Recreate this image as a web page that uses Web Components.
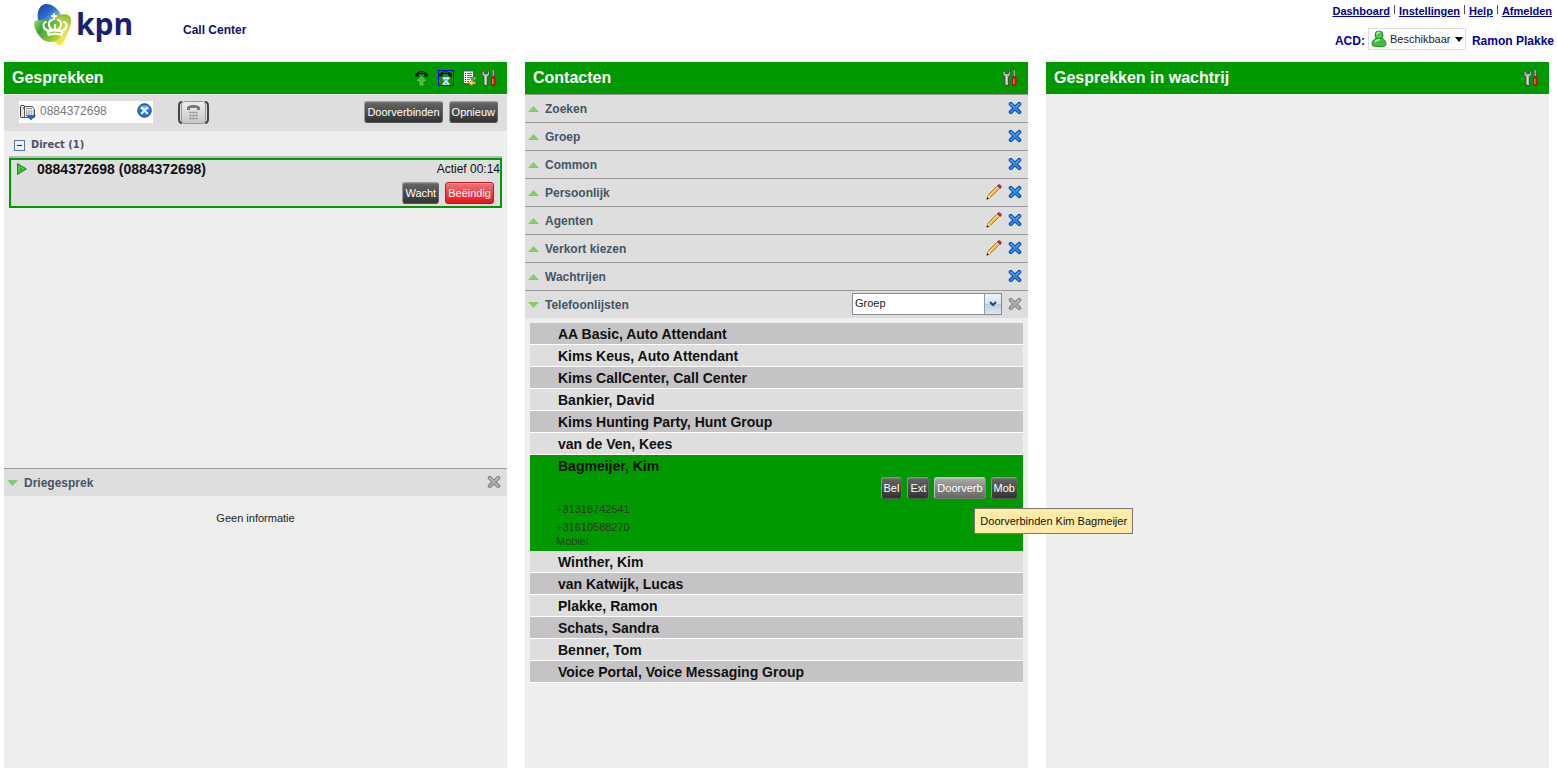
<!DOCTYPE html>
<html lang="nl">
<head>
<meta charset="utf-8">
<title>Call Center</title>
<style>
  html, body { margin: 0; height: 100%; }
  body { font: 12px/16px "Liberation Sans", Arial, sans-serif; color: #111; background: #fff; }
</style>
</head>
<body>
<call-center-app></call-center-app>

<template id="t-app">
  <style>
    :host { display: flex; flex-direction: column; min-height: 100vh; }
    main { flex: 1; display: grid; grid-template-columns: repeat(3, minmax(0, 1fr)); gap: 18px; padding: 0 8px 0 4px; }
    .tools { display: flex; gap: 8px; }
    .tools span { display: flex; gap: 3px; }
    .calls { flex: 1; }
    .conference { min-height: 300px; }
    .empty { margin: 0; padding: 14px 0; text-align: center; font-size: 11px; color: #222; }
    .list { padding: 5px; }
    drop-down { width: 150px; }
  </style>
  <app-header></app-header>
  <main>
    <app-panel heading="Gesprekken">
      <div class="tools" slot="tools">
        <icon-button icon="pickup" label="Opnemen"></icon-button>
        <icon-button icon="hold" label="Wachtstand"></icon-button>
        <span>
          <icon-button icon="log" label="Gesprekslijst"></icon-button>
          <icon-button icon="tools" label="Opties"></icon-button>
        </span>
      </div>
      <dial-bar></dial-bar>
      <call-group class="calls" heading="Direct (1)">
        <active-call caller="0884372698 (0884372698)" status="Actief 00:14"></active-call>
      </call-group>
      <div class="conference">
        <section-bar heading="Driegesprek" open disabled></section-bar>
        <p class="empty">Geen informatie</p>
      </div>
    </app-panel>
    <app-panel heading="Contacten">
      <icon-button slot="tools" icon="tools" label="Opties"></icon-button>
      <section-bar heading="Zoeken"></section-bar>
      <section-bar heading="Groep"></section-bar>
      <section-bar heading="Common"></section-bar>
      <section-bar heading="Persoonlijk" edit></section-bar>
      <section-bar heading="Agenten" edit></section-bar>
      <section-bar heading="Verkort kiezen" edit></section-bar>
      <section-bar heading="Wachtrijen"></section-bar>
      <section-bar heading="Telefoonlijsten" open disabled><drop-down></drop-down></section-bar>
      <div class="list" role="list">
        <contact-row name="AA Basic, Auto Attendant" shade></contact-row>
        <contact-row name="Kims Keus, Auto Attendant"></contact-row>
        <contact-row name="Kims CallCenter, Call Center" shade></contact-row>
        <contact-row name="Bankier, David"></contact-row>
        <contact-row name="Kims Hunting Party, Hunt Group" shade></contact-row>
        <contact-row name="van de Ven, Kees"></contact-row>
        <contact-card></contact-card>
        <contact-row name="Winther, Kim"></contact-row>
        <contact-row name="van Katwijk, Lucas" shade></contact-row>
        <contact-row name="Plakke, Ramon"></contact-row>
        <contact-row name="Schats, Sandra" shade></contact-row>
        <contact-row name="Benner, Tom"></contact-row>
        <contact-row name="Voice Portal, Voice Messaging Group" shade></contact-row>
      </div>
    </app-panel>
    <app-panel heading="Gesprekken in wachtrij">
      <icon-button slot="tools" icon="tools" label="Opties"></icon-button>
    </app-panel>
  </main>
</template>

<template id="t-header">
  <style>
    :host { display: flex; justify-content: space-between; height: 62px; box-sizing: border-box; padding: 3px 3px 0 33px; color: #009; font-weight: bold; }
    .brand { display: flex; align-items: flex-start; color: #1a1f71; }
    .brand svg { width: 40px; height: 43px; display: block; }
    .word { font: bold 30px/42px "Open Sans", "Noto Sans", sans-serif; margin-left: 3px; width: 107px; }
    .name { margin-top: 19px; color: #11116b; }
    .side { display: flex; flex-direction: column; align-items: flex-end; gap: 9px; }
    nav { display: flex; gap: 4px; font-size: 11px; padding-right: 2px; }
    nav a { color: #009; }
    nav i { width: 1px; height: 9px; margin-top: 2px; background: #555; }
    .status { display: flex; align-items: center; gap: 3px; }
    .status label, .status b { padding-top: 4px; }
    .status b { margin-left: 3px; }
    .pick { display: flex; align-items: center; width: 98px; height: 22px; box-sizing: border-box; border: 1px solid #dcdce2; padding: 0 2px; background: #fff; }
    select { appearance: none; border: 0; padding: 0; margin: 0 0 0 3px; background: none; flex: 1; min-width: 0; font: 11px/16px "Liberation Sans", Arial, sans-serif; color: #222; }
    .pick .arrow { width: 8px; height: 5px; }
  </style>
  <div class="brand">
    <svg viewBox="0 0 40 43" aria-hidden="true">
      <defs>
        <linearGradient id="b" x1="0" y1="0" x2="1" y2="1"><stop offset="0" stop-color="#1b3d95"/><stop offset=".45" stop-color="#2b6fd0"/><stop offset=".9" stop-color="#c3e6fb"/></linearGradient>
        <linearGradient id="g" x1="0" y1="0" x2="1" y2=".5"><stop offset="0" stop-color="#b4dc7a"/><stop offset=".35" stop-color="#3ca23a"/><stop offset="1" stop-color="#b5d435"/></linearGradient>
        <linearGradient id="y" x1=".4" y1="1" x2=".6" y2="0"><stop offset="0" stop-color="#f3e850"/><stop offset=".5" stop-color="#dfe45a"/><stop offset="1" stop-color="#8dbc2a"/></linearGradient>
      </defs>
      <path d="M6 22C3 11 5 3 12 1c7-1 14 5 17 13l-4 8z" fill="url(#b)"/>
      <path d="M20 14c8-4 17-4 18 2 1 6-5 19-8 24-3 4-7 2-9-3z" fill="url(#y)"/>
      <path d="M2 18c6-2 20-2 25 0 4 3 4 12 0 17-5 5-13 5-18 1C4 31-1 22 2 18z" fill="url(#g)"/>
      <g fill="none" stroke="#fff" stroke-width="2" stroke-linecap="round">
        <path d="M14 27c-4-1-5-7-1-8M18 26c-3-3-3-8 1-9M22 26v-4M26 26c3-3 3-8-1-9M30 27c4-1 5-7 1-8"/>
        <path d="M21 11v5M19 13h4"/>
      </g>
      <path d="M13 27q9-3 18 0l-2 6q-7-2-14 0z" fill="#fff"/>
      <path d="M16 30q6-2 12 0" stroke="#8cc43c" fill="none"/>
    </svg>
    <span class="word">kpn</span>
    <span class="name">Call Center</span>
  </div>
  <div class="side">
    <nav>
      <a href="#dashboard">Dashboard</a><i></i><a href="#instellingen">Instellingen</a><i></i><a href="#help">Help</a><i></i><a href="#afmelden">Afmelden</a>
    </nav>
    <div class="status">
      <label for="acd">ACD:</label>
      <div class="pick">
        <ui-icon name="user"></ui-icon>
        <select id="acd"><option>Beschikbaar</option></select>
        <svg class="arrow" viewBox="0 0 8 5" aria-hidden="true"><path d="M0 0h8L4 5z" fill="#000"/></svg>
      </div>
      <b>Ramon Plakke</b>
    </div>
  </div>
</template>

<template id="t-panel">
  <style>
    :host { display: flex; flex-direction: column; background: #eee; }
    header { display: flex; align-items: center; justify-content: space-between; height: 32px; padding: 0 10px 0 8px; background: #090; color: #fff; }
    h2 { margin: 0; font-size: 16px; line-height: 20px; }
  </style>
  <header><h2></h2><slot name="tools"></slot></header>
  <slot></slot>
</template>

<template id="t-dial">
  <style>
    :host { display: flex; align-items: center; height: 36px; margin-top: 1px; padding: 0 9px 0 15px; background: #dedede; }
    .field { display: flex; align-items: center; width: 134px; height: 22px; background: #fff; margin-bottom: 2px; }
    .field ui-icon { margin-left: 1px; }
    input { flex: 1; min-width: 0; border: 0; padding: 0 0 2px 4px; background: none; font: 12px/16px "Liberation Sans", Arial, sans-serif; color: #777; outline: 0; }
    .pad { margin: 0 auto 2px 25px; width: 31px; height: 23px; padding: 0; border: 0; background: none; }
    .pad svg { display: block; }
    .actions { display: flex; gap: 6px; margin-bottom: 2px; }
  </style>
  <div class="field">
    <ui-icon name="deskphone"></ui-icon>
    <input type="text" aria-label="Nummer" value="0884372698">
    <icon-button icon="clear" label="Wissen"></icon-button>
  </div>
  <button class="pad" aria-label="Toetsenblok">
    <svg width="31" height="23" viewBox="0 0 31 23" aria-hidden="true">
      <defs><linearGradient id="k" x1="0" y1="0" x2="0" y2="1"><stop offset="0" stop-color="#eee"/><stop offset="1" stop-color="#c8c8c8"/></linearGradient></defs>
      <path d="M4 1C1 1 1 3 1 5v13c0 2 0 4 3 4M27 1c3 0 3 2 3 4v13c0 2 0 4-3 4" fill="none" stroke="#444" stroke-width="2"/>
      <rect x="3.500" y=".5" width="24" height="22" rx="3" fill="url(#k)" stroke="#999"/>
      <path d="M9 9V7c0-2 3-3 6.500-3S22 5 22 7v2h-3V7h-7v2z" fill="#777"/>
      <path d="M11.500 11.500h8M11.500 14.500h8M11.500 17.500h8" stroke="#888" stroke-width="1.500" stroke-dasharray="2 1"/>
    </svg>
  </button>
  <div class="actions"><push-button>Doorverbinden</push-button><push-button>Opnieuw</push-button></div>
</template>

<template id="t-group">
  <style>
    :host { display: block; padding: 5px 5px 0; }
    header { display: flex; align-items: center; gap: 6px; height: 18px; padding: 0 0 2px 5px; border-bottom: 2px solid #b4bcbc; }
    h3 { margin: 0; font: bold 11px/16px "DejaVu Sans Condensed", "DejaVu Sans", sans-serif; color: #456; }
  </style>
  <header><ui-icon name="minus"></ui-icon><h3></h3></header>
  <slot></slot>
</template>

<template id="t-call">
  <style>
    :host { display: block; border: 2px solid #090; background: #dedede; }
    .top { display: flex; align-items: center; height: 18px; padding-left: 6px; }
    b { margin-left: 10px; font-size: 14px; flex: 1; }
    .actions { display: flex; justify-content: flex-end; gap: 6px; padding: 4px 6px 2px; }
  </style>
  <div class="top"><ui-icon name="play"></ui-icon><b></b><span></span></div>
  <div class="actions"><push-button>Wacht</push-button><push-button tone="red">Beëindig</push-button></div>
</template>

<template id="t-section">
  <style>
    :host { display: flex; align-items: center; gap: 6px; height: 27px; padding-right: 6px; border-top: 1px solid #999; background: #dedede; }
    .toggle { display: flex; align-items: center; gap: 6px; flex: 1; height: 27px; border: 0; padding: 0 0 0 3px; background: none; font: bold 12px/16px "Liberation Sans", Arial, sans-serif; color: #456; text-align: left; }
    icon-button, ::slotted(*) { margin-bottom: 2px; }
  </style>
  <button class="toggle"><ui-icon></ui-icon><span></span></button>
  <slot></slot>
</template>

<template id="t-drop">
  <style>
    :host { display: flex; height: 22px; box-sizing: border-box; border: 1px solid #8a8a92; background: #fff; }
    select { appearance: none; flex: 1; min-width: 0; border: 0; margin: 0; padding: 0 0 1px 2px; background: none; font: 11px/16px "Liberation Sans", Arial, sans-serif; color: #222; }
    span { display: flex; align-items: center; justify-content: center; width: 16px; border-left: 1px solid #8a9ab0; background: linear-gradient(#eef4fa, #d4e2ee 50%, #b8cde0 50%, #dbe8f2); }
    svg { width: 8px; height: 6px; }
  </style>
  <select aria-label="Telefoonlijst"><option>Groep</option></select>
  <span><svg viewBox="0 0 8 6" aria-hidden="true"><path d="M1 1l3 3 3-3" fill="none" stroke="#345" stroke-width="2"/></svg></span>
</template>

<template id="t-row">
  <style>
    :host { display: block; height: 21px; padding-left: 28px; border-bottom: 1px solid #fff; background: #dedede; font: bold 14px/22px "Liberation Sans", Arial, sans-serif; }
    :host([shade]) { background: #c6c3c6; }
  </style>
  <span></span>
</template>

<template id="t-card">
  <style>
    :host { display: block; height: 96px; background: #090; }
    .name { padding-left: 28px; font: bold 14px/22px "Liberation Sans", Arial, sans-serif; }
    .actions { display: flex; justify-content: flex-end; gap: 5px; padding-right: 5px; }
    .hint { position: relative; }
    .tip { position: absolute; left: 40px; top: 31px; z-index: 5; padding: 4px 5px; border: 1px solid #777; background: #ffeba8; color: #111; font-size: 11px; white-space: nowrap; }
    .numbers { padding: 1px 0 0 26px; font-size: 11px; line-height: 18px; color: #2a3a2a; }
    .numbers small { display: block; font-size: 11px; line-height: 10px; }
    push-button { --edge: #7c9c7c; }
  </style>
  <div class="name">Bagmeijer, Kim</div>
  <div class="actions">
    <push-button>Bel</push-button><push-button>Ext</push-button>
    <div class="hint"><push-button tone="light">Doorverb</push-button><div class="tip" role="tooltip">Doorverbinden Kim Bagmeijer</div></div>
    <push-button>Mob</push-button>
  </div>
  <div class="numbers">
    <div>+31318742541</div>
    <div>+31610588270</div>
    <small>Mobiel</small>
  </div>
</template>

<template id="t-push">
  <style>
    :host { display: block; }
    button { display: block; height: 22px; box-sizing: border-box; margin: 0; padding: 0 2px; border: 1px solid #777; border-color: var(--edge, #999) #666 #555 var(--edge, #999); border-radius: 3px; background: linear-gradient(#666, #333); box-shadow: inset 0 1px #777; color: #fff; font: 11px/18px "Liberation Sans", Arial, sans-serif; }
    :host([tone="red"]) button { border-color: #c4141c; background: linear-gradient(#f5737a, #e8141c); box-shadow: inset 0 1px #f9a0a4; }
    :host([tone="light"]) button { border-color: #c4c4c4 #888 #777 #c4c4c4; background: linear-gradient(#aaa, #666); box-shadow: inset 0 1px #bbb; }
  </style>
  <button><slot></slot></button>
</template>

<template id="t-iconbutton">
  <style>
    :host { display: block; }
    button { display: block; border: 0; margin: 0; padding: 0; background: none; }
  </style>
  <button><ui-icon></ui-icon></button>
</template>

<script>
  const handset = '<path d="M1 6.500V4c2-2 4-2.500 6.500-2.500S12 2 14 4v2.500h-3.500L10 4H5l-.5 2.500z" fill="#151515"/><path d="M5 2.500h5" stroke="#666" stroke-width=".6"/>';
  const cross = (dark, mid, light) => [14, 14,
    `<path d="M2.800 3l8.400 8M11.200 3l-8.400 8" stroke="${dark}" stroke-width="4.200" stroke-linecap="round"/>
     <path d="M3 3l8 8M11 3l-8 8" stroke="${mid}" stroke-width="2.200" stroke-linecap="round"/>
     <path d="M2.500 3l3 3M11.500 3l-3 3" stroke="${light}" stroke-width=".8" stroke-linecap="round"/>`];
  const icons = {
    up: [11, 6, '<path d="M5.500 0L11 6H0z" fill="#8c6"/>'],
    down: [11, 6, '<path d="M5.500 6L11 0H0z" fill="#8c6"/>'],
    cross: cross('#0c4fae', '#3385e4', '#8cc0f8'),
    crossOff: cross('#888', '#aaa', '#ccc'),
    pencil: [16, 16, '<path d="M1 15l1-4 8.500-8.500 2.500 2.500-8.500 8.500z" fill="#f2b632" stroke="#8a6424" stroke-width=".7"/><path d="M3.500 11.500l7.500-7.500" stroke="#fde28a"/><path d="M1 15l1-4 2.800 2.600z" fill="#f3dcb4"/><path d="M.5 15.500l.8-2.500 1.700 1.700z" fill="#111"/><path d="M10 3l3 3 1-1-3-3z" fill="#ccc"/><path d="M11.200 1.800c1-1.300 2.300-1.600 3.500-.400s.5 2.300-.7 3.300z" fill="#c8283c" stroke="#8a1424" stroke-width=".6"/>'],
    tools: [16, 16, '<path d="M1 1v3.500L3 7v8.500h3.500V7l2-2.500V1H6.500v2.500h-3V1z" fill="#b4b4bc" stroke="#444" stroke-width=".9"/><path d="M4.300 6v8" stroke="#e4e4ec"/><path d="M12.300 0v8" stroke="#4a5a4a" stroke-width="2.600"/><path d="M12.300 0v6" stroke="#a4a4a4" stroke-width="1.400"/><rect x="10.500" y="7" width="3.600" height="8.500" rx="1" fill="#e81818" stroke="#9c0c0c" stroke-width=".8"/><path d="M11.800 9v5" stroke="#ff8a8a"/>'],
    pickup: [16, 16, handset + '<path d="M7.500 6.500l4 4H9v4.500H6v-4.500H3.500z" fill="#4cae3c" stroke="#8ad07a" stroke-width=".7"/>'],
    hold: [16, 16, '<rect x=".5" y=".5" width="15" height="15" stroke="#00d"/>' + handset + '<path d="M4.500 7h7v1.500L9.300 11l2.200 2.500V15h-7v-1.500L6.700 11 4.500 8.500z" fill="#e8f6ff" stroke="#4a88d0" stroke-width=".6"/><path d="M6 9h4L8 11zM8 12l2 2H6z" fill="#5aa8f0"/>'],
    log: [16, 16, '<rect x="1.500" y="1" width="10" height="12.500" fill="#fff" stroke="#2c5cc0"/><path d="M3 3.500h1M3 5.500h1M3 7.500h1M3 9.500h1M3 11.500h1" stroke="#111"/><path d="M5 3.500h5M5 5.500h5M5 7.500h4M5 9.500h3M5 11.500h2" stroke="#3a78d8"/><path d="M9 7.500h2.500v-2l4 3-4 3v-2H9z" fill="#4cc43c" stroke="#1c6c1c" stroke-width=".6"/><path d="M13.500 11.800h-3v-2L6 13l4.500 3v-2h3z" fill="#fbc85a" stroke="#a86c10" stroke-width=".6"/>'],
    user: [16, 18, '<path d="M8 8c-5 0-7 3-7 7 0 2 14 2 14 0 0-4-2-7-7-7z" fill="#3cc03c" stroke="#1a8a1a"/><circle cx="8" cy="5" r="4" fill="#48cc48" stroke="#1a8a1a"/><path d="M5.500 4.500c.5-2 2-2.500 3.500-2M4 12c1-2 3-2.500 5-2" fill="none" stroke="#b8f4b0" stroke-width="1.400"/>'],
    deskphone: [16, 18, '<rect x=".5" y="2.500" width="4" height="12" rx="1" fill="#e4e4e4" stroke="#333"/><path d="M4.500 3.500h8l2 3v8h-10z" fill="#f4f4f4" stroke="#555"/><path d="M3.500 4v2" stroke="#d44"/><path d="M6 5.500h6" stroke="#888"/><path d="M6 8h8M6 10h8M6 12h8" stroke="#778" stroke-dasharray="1.500 .8"/><path d="M6.500 12.500h9L11 17z" fill="#2a6ad8" stroke="#1a4aa0" stroke-width=".6"/>'],
    clear: [16, 18, '<circle cx="7.500" cy="7.500" r="6.800" fill="#2c70d4" stroke="#1a50a8"/><path d="M2.500 6a5.300 5.300 0 0 1 10 0q-5 2-10 0" fill="#7eb0f0"/><path d="M4.800 4.800l5.400 5.400M10.200 4.800l-5.400 5.400" stroke="#fff" stroke-width="2" stroke-linecap="round"/>'],
    minus: [11, 11, '<rect x=".5" y=".5" width="10" height="10" fill="#eef2fa" stroke="#5a7aa0"/><path d="M3 5.500h5" stroke="#234"/>'],
    play: [10, 12, '<path d="M.5 .5L9.500 6 .5 11.500z" fill="#38b02c" stroke="#2a8a24"/><path d="M2 3v6M3 3.500L7 6" stroke="#6cd05c"/>']
  };

  // Shared base: clones the element's template into an open shadow root.
  const define = (tag, id, setup) => customElements.define(tag, class extends HTMLElement {
    connectedCallback() {
      if (this.shadowRoot) return;
      const root = this.attachShadow({ mode: 'open' });
      root.append(document.getElementById(id).content.cloneNode(true));
      if (setup) setup(this, root);
    }
  });
  const setText = (root, selector, text) => { root.querySelector(selector).textContent = text; };

  customElements.define('ui-icon', class extends HTMLElement {
    static observedAttributes = ['name'];
    constructor() { super(); this.attachShadow({ mode: 'open' }); }
    attributeChangedCallback() {
      const [w, h, body] = icons[this.getAttribute('name')];
      this.shadowRoot.innerHTML = `<style>:host{display:block;flex:none}svg{display:block}</style>
        <svg width="${w}" height="${h}" viewBox="0 0 ${w} ${h}" fill="none" aria-hidden="true">${body}</svg>`;
    }
  });
  define('icon-button', 't-iconbutton', (el, root) => {
    root.querySelector('button').setAttribute('aria-label', el.getAttribute('label'));
    root.querySelector('ui-icon').setAttribute('name', el.getAttribute('icon'));
  });
  define('push-button', 't-push');
  define('drop-down', 't-drop');
  define('section-bar', 't-section', (el, root) => {
    setText(root, 'span', el.getAttribute('heading'));
    root.querySelector('ui-icon').setAttribute('name', el.hasAttribute('open') ? 'down' : 'up');
    const add = (icon, label) => {
      const button = document.createElement('icon-button');
      button.setAttribute('icon', icon);
      button.setAttribute('label', label);
      root.append(button);
    };
    if (el.hasAttribute('edit')) add('pencil', 'Bewerken');
    add(el.hasAttribute('disabled') ? 'crossOff' : 'cross', 'Sluiten');
  });
  define('contact-row', 't-row', (el, root) => {
    el.setAttribute('role', 'listitem');
    setText(root, 'span', el.getAttribute('name'));
  });
  define('contact-card', 't-card', el => el.setAttribute('role', 'listitem'));
  define('active-call', 't-call', (el, root) => {
    setText(root, 'b', el.getAttribute('caller'));
    setText(root, 'span', el.getAttribute('status'));
  });
  define('call-group', 't-group', (el, root) => setText(root, 'h3', el.getAttribute('heading')));
  define('dial-bar', 't-dial');
  define('app-panel', 't-panel', (el, root) => setText(root, 'h2', el.getAttribute('heading')));
  define('app-header', 't-header');
  define('call-center-app', 't-app');
</script>
</body>
</html>
